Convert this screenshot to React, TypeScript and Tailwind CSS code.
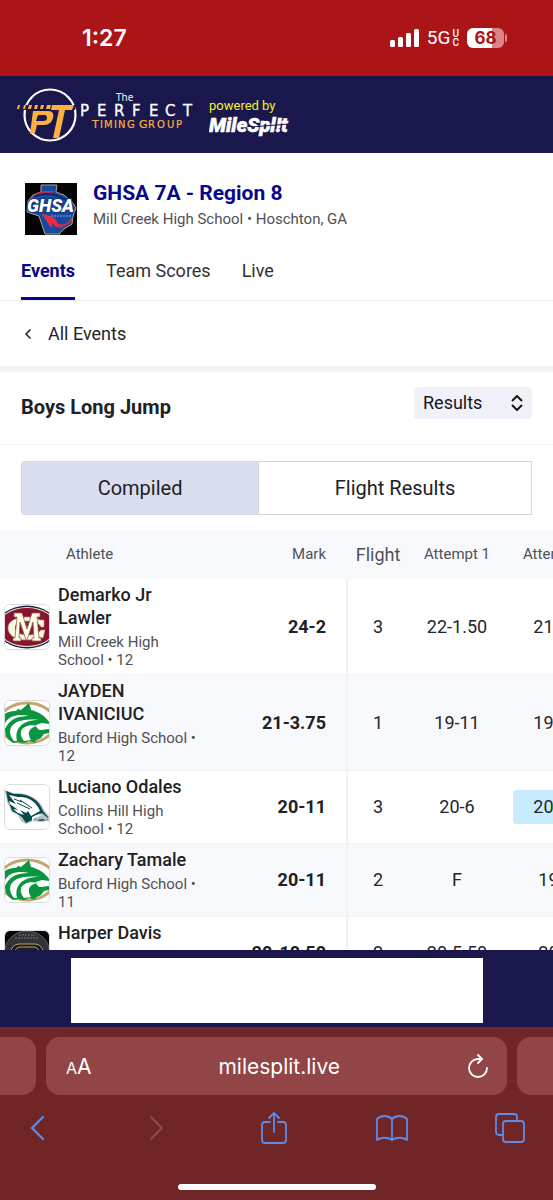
import type { ReactNode } from "react";
import { ChevronLeft } from "lucide-react";

type Result = {
  name: string;
  school: string;
  logo: ReactNode;
  mark: string;
  flight: string;
  attempts: { value: string; best?: boolean }[];
};

function PerfectTimingLogo() {
  return (
    <svg width="181" height="56" viewBox="0 0 181 56" role="img" aria-label="The Perfect Timing Group">
      <circle cx="34" cy="28" r="25.5" fill="none" stroke="#fff" strokeWidth="2.2" />
      <path d="M6 18h54l-1 5H4z" fill="#1a174d" />
      <g fill="#fbb040">
        <path d="M2 18h2l-1 4H1zM8 18h2l-1 4H7zM13 18h3l-1 4h-3zM19 18h3l-1 4h-3zM25 18h3l-1 4h-3zM31 18h4l-1 4h-4z" />
        <path d="M36 18h22l-2 5h-7l-6 28h-6l6-28h-8z" />
        <path
          fillRule="evenodd"
          d="M17 24h15c5 0 6 3 5 7s-4 7-9 7h-7l-2 8-5 1zM22 28l-2 6h7c3 0 4-1 4-3s-1-3-2-3z"
        />
      </g>
      <text x="100" y="14" fontSize="10" fill="#f1f1f6" fontFamily="Noto Sans, sans-serif">
        The
      </text>
      <text
        x="64 81 98 116 133 149 167"
        y="29"
        fontSize="15"
        fill="#fff"
        stroke="#fff"
        strokeWidth=".3"
        fontFamily="DejaVu Sans, sans-serif"
      >
        PERFECT
      </text>
      <text
        x="76 84 88 98 102 111 119 123 132 141 151 160"
        y="41"
        fontFamily="DejaVu Sans, sans-serif"
        fontSize="11"
        fill="#fbb040"
        stroke="#fbb040"
        strokeWidth=".2"
      >
        T<tspan fontSize="10">IMING </tspan>G<tspan fontSize="10">ROUP</tspan>
      </text>
    </svg>
  );
}

function MileSplitLogo() {
  return (
    <svg width="84" height="24" viewBox="0 0 84 24" role="img" aria-label="MileSplit">
      <text
        x="0"
        y="18"
        fontFamily="Roboto, sans-serif"
        fontSize="20"
        fontWeight="900"
        fontStyle="italic"
        fill="#fff"
        stroke="#fff"
        strokeWidth=".5"
      >
        MileSpl!t
      </text>
      <path d="M42 13l38-3" stroke="#1a174d" strokeWidth="1" />
    </svg>
  );
}

function GhsaLogo() {
  return (
    <svg viewBox="0 0 52 52" className="size-13 shrink-0" role="img" aria-label="GHSA">
      <path d="M0 0h52v52H0z" fill="#050507" />
      <path
        d="M16 2h16l-1 7 8 3 9 8 3 5-3 8-1 8-8 5-4 4v1H20l-3-9-3-9L2 29l1-11 5-6 8-3z"
        fill="#174a9f"
        stroke="#a9a58c"
        strokeWidth="1"
      />
      <path d="M7 16C10 9 19 8 28 9" fill="none" stroke="#e3263d" strokeWidth="1.5" />
      <path d="M9 14c9-5 23-4 35 5" fill="none" stroke="#0b2c6c" strokeWidth="2" />
      <path d="M16 31c6 1 12 2 15 6l3 5 6 3-9-1-4-4v5c-5-4-5-9-11-14z" fill="#ee2b3e" />
      <path d="M33 42c7 1 12-2 14-7" fill="none" stroke="#ee2b3e" strokeWidth="1.5" />
      <text
        x="2"
        y="29"
        fontFamily="Roboto, sans-serif"
        fontSize="18"
        fontWeight="900"
        fontStyle="italic"
        fill="#fff"
        stroke="#0d357c"
        strokeWidth="2"
        paintOrder="stroke"
      >
        GHSA
      </text>
      <path d="M26 33h20" stroke="#89a9de" strokeWidth="1" strokeDasharray="2 1" />
    </svg>
  );
}

function MillCreekLogo() {
  return (
    <svg viewBox="0 0 44 44" className="size-full" role="img" aria-label="Mill Creek">
      <path d="M0 0h44v44H0z" fill="#fff" />
      <ellipse cx="22" cy="22" rx="30" ry="21.5" fill="#17254a" />
      <ellipse cx="22" cy="22" rx="29" ry="20" fill="#efe6c4" />
      <ellipse cx="22" cy="22" rx="28" ry="19" fill="#8b1233" />
      <path
        d="M39 15v7h-3c-2-4-6-6-13-6-9 0-13 3-13 7s4 7 13 7c7 0 11-2 13-5h4l-2 8-4-1c-3 2-7 3-12 3C10 35 3 30 3 23s8-11 19-11c5 0 10 1 13 3z"
        fill="#fdf8e4"
        stroke="#b49a62"
        strokeWidth=".6"
      />
      <path
        d="M9 8h8l5 16 5-16h8v4h-3l2 21h2v3h-9v-3h2l-1-16-6 18h-1l-6-18-1 16h2v3H8v-3h2l2-21H9z"
        fill="#fffdf0"
        stroke="#8b6a3b"
        strokeWidth=".8"
      />
    </svg>
  );
}

function BufordLogo() {
  return (
    <svg viewBox="0 0 44 44" className="size-full" role="img" aria-label="Buford">
      <path d="M0 0h44v44H0z" fill="#fff" />
      <ellipse cx="22" cy="22" rx="28" ry="20" fill="none" stroke="#c3a66f" strokeWidth="3" />
      <path
        d="M0 13c4-3 8-3 11-3l2-2 3 1 8-7 2 7c8 2 14 6 18 12v3l-8-1-5 2 3 4 10-1v4l-5 1-3 4-6 3 1 2-7-2-5 2-6-1-5 1C3 39 0 35 0 28z"
        fill="#0a9640"
      />
      <path d="M9 40C0 29 6 16 34 19 19 19 9 26 12 40z" fill="#fff" />
      <path d="M0 22C5 14 14 13 24 15 12 15 5 18 0 28z" fill="#fff" />
      <path d="M19 40c-8-10 0-18 14-15-8 1-12 6-7 14z" fill="#fff" />
      <path d="M31 24l6-2 7 1v4l-8 2-4-2z" fill="#fff" />
    </svg>
  );
}

function CollinsHillLogo() {
  return (
    <svg viewBox="0 0 44 44" className="size-full" role="img" aria-label="Collins Hill">
      <path d="M0 0h44v44H0z" fill="#fff" />
      <path d="M0 5l8 3c16-1 27 6 31 17l5 6v5l-9 1-7-1-7 3-5-3-3-6-6-3-3-6-2-4z" fill="#b9c0c2" />
      <path d="M1 6l8 3c14-1 25 5 29 17l5 6v3l-8 1-6-2-8 4-4-6-6-4-4-2-2-6-2-4z" fill="#064c4c" />
      <path
        d="M4 10l9 2c10-1 19 5 22 14l-9 5-3-5-2 2-6-3 4 5-6-2-5-4 5 1-8-6-1-3 7 3z"
        fill="#fff"
      />
      <path d="M12 18l13 6M15 15l12 8M9 14l8 3" stroke="#064c4c" strokeWidth="1" />
      <path d="M29 31l8-3 6 5-1 3-4-2-7 1z" fill="#b5c1c4" />
      <path d="M27 32l7-3 3 1-7 3-3 3z" fill="#fff" />
    </svg>
  );
}

function TrackBadgeLogo() {
  return (
    <svg viewBox="0 0 44 44" className="size-full" role="img" aria-label="Track and Field">
      <path d="M0 0h44v44H0z" fill="#070809" />
      <circle cx="22" cy="23" r="23" fill="#303235" stroke="#606163" strokeWidth="1" />
      <path d="M14 4h16M10 7h24" stroke="#777" strokeWidth="1" strokeDasharray="2 1" />
      <rect x="6" y="13" width="32" height="24" rx="8" fill="#18191b" stroke="#b7a76b" strokeWidth="1" />
      <rect x="10" y="16" width="24" height="18" rx="5" fill="#202020" stroke="#b7a76b" strokeWidth="1" />
    </svg>
  );
}

const tabs = ["Events", "Team Scores", "Live"];

const results: Result[] = [
  {
    name: "Demarko Jr Lawler",
    school: "Mill Creek High School • 12",
    logo: <MillCreekLogo />,
    mark: "24-2",
    flight: "3",
    attempts: [{ value: "22-1.50" }, { value: "21-10" }],
  },
  {
    name: "JAYDEN IVANICIUC",
    school: "Buford High School • 12",
    logo: <BufordLogo />,
    mark: "21-3.75",
    flight: "1",
    attempts: [{ value: "19-11" }, { value: "19-10" }],
  },
  {
    name: "Luciano Odales",
    school: "Collins Hill High School • 12",
    logo: <CollinsHillLogo />,
    mark: "20-11",
    flight: "3",
    attempts: [{ value: "20-6" }, { value: "20-11", best: true }],
  },
  {
    name: "Zachary Tamale",
    school: "Buford High School • 11",
    logo: <BufordLogo />,
    mark: "20-11",
    flight: "2",
    attempts: [{ value: "F" }, { value: "19-9" }],
  },
  {
    name: "Harper Davis",
    school: "",
    logo: <TrackBadgeLogo />,
    mark: "20-10.50",
    flight: "2",
    attempts: [{ value: "20-5.50" }, { value: "20-9" }],
  },
];

function StatusBar() {
  return (
    <div className="flex h-19 shrink-0 items-center justify-between bg-[#ab1517] pr-[46px] pl-[82px] text-white">
      <span className="font-[Inter,sans-serif] text-[23px] font-semibold">1:27</span>
      <div className="flex items-center gap-2">
        <svg width="29" height="18" viewBox="0 0 29 18" fill="#fff" aria-hidden="true">
          <rect y="11" width="5" height="7" rx="1.5" />
          <rect x="8" y="8" width="5" height="10" rx="1.5" />
          <rect x="16" y="4" width="5" height="14" rx="1.5" />
          <rect x="24" width="5" height="18" rx="1.5" />
        </svg>
        <div className="flex items-center gap-0.5 font-[Roboto,sans-serif]">
          <span className="text-[19px] leading-5">5G</span>
          <span className="flex flex-col text-[10px] leading-[9px] font-medium">
            <span>U</span>
            <span>C</span>
          </span>
        </div>
        <div className="flex items-center gap-px">
          <span className="flex h-5 w-[37px] items-center justify-center rounded-md bg-linear-to-r from-white from-68% to-[#d98585] to-68% font-[Inter,sans-serif] text-[17px] leading-5 font-bold text-[#a71517]">
            68
          </span>
          <span className="h-2 w-0.5 rounded-r-full bg-[#d98585]" />
        </div>
      </div>
    </div>
  );
}

function SiteHeader() {
  return (
    <header className="flex h-[77px] shrink-0 items-center gap-2 bg-[#1a174d] px-4">
      <PerfectTimingLogo />
      <div className="flex flex-col pt-1.5 pl-1">
        <span className="text-[13px] leading-4 text-[#f2f224]">powered by</span>
        <MileSplitLogo />
      </div>
    </header>
  );
}

function MeetHeader() {
  return (
    <>
      <div className="flex gap-4 px-[25px] pt-[30px]">
        <GhsaLogo />
        <div>
          <h1 className="text-[21px] leading-5 font-bold text-[#08088c]">GHSA 7A - Region 8</h1>
          <p className="mt-1.5 text-[15px] leading-5 text-[#505154]">Mill Creek High School • Hoschton, GA</p>
        </div>
      </div>
      <nav className="mt-1 flex gap-[31px] border-b border-[#eeeef0] px-[21px]">
        {tabs.map((tab) => (
          <a
            key={tab}
            href="#"
            className={
              tab === "Events"
                ? "border-b-3 border-[#08088c] pt-5 pb-3.5 text-lg leading-6 font-bold text-[#08088c]"
                : "border-b-3 border-transparent pt-5 pb-3.5 text-lg leading-6 text-[#303134]"
            }
          >
            {tab}
          </a>
        ))}
      </nav>
      <a
        href="#"
        className="flex h-[71px] items-center gap-3 border-b-6 border-[#f3f3f4] px-5 text-lg text-[#242528]"
      >
        <ChevronLeft className="size-4" strokeWidth={2.5} />
        All Events
      </a>
    </>
  );
}

function EventToolbar() {
  return (
    <>
      <div className="flex h-[73px] items-start justify-between border-b border-[#f1f1f3] px-[21px] pt-[15px]">
        <h2 className="pt-2 text-xl leading-6 font-bold text-[#202124]">Boys Long Jump</h2>
        <div className="relative">
          <select
            aria-label="View"
            className="h-8 w-[118px] appearance-none rounded bg-[#f1f1f9] px-[9px] text-lg leading-6 text-[#161619]"
          >
            <option>Results</option>
          </select>
          <svg
            width="14"
            height="16"
            viewBox="0 0 14 16"
            fill="none"
            stroke="#161619"
            strokeWidth="2"
            className="pointer-events-none absolute top-2 right-2"
          >
            <path d="M2 6l5-5 5 5M2 10l5 5 5-5" />
          </svg>
        </div>
      </div>
      <div className="flex px-[21px] py-4 text-xl text-[#202124]">
        <button className="h-[54px] flex-auto rounded-l border border-[#d3d7e6] bg-[#d9deee]">Compiled</button>
        <button className="h-[54px] flex-auto border border-l-0 border-[#d3d4d8] bg-white">Flight Results</button>
      </div>
    </>
  );
}

function ResultsTable() {
  return (
    <div className="overflow-hidden">
      <table className="w-full min-w-[606px] table-fixed border-separate border-spacing-0 text-lg text-[#242528]">
        <colgroup>
          <col className="w-[58px]" />
          <col className="w-[150px]" />
          <col className="w-[140px]" />
          <col className="w-[60px]" />
          <col className="w-[98px]" />
          <col />
        </colgroup>
        <thead>
          <tr className="h-12 bg-[#f8f9fd] text-[15px] text-[#505154]">
            <th />
            <th className="px-2 text-left font-normal">Athlete</th>
            <th className="pr-[22px] text-right font-normal">Mark</th>
            <th className="text-lg leading-5 font-normal">Flight</th>
            <th className="font-normal">Attempt 1</th>
            <th className="font-normal">Attempt 2</th>
          </tr>
        </thead>
        <tbody>
          {results.map((result) => (
            <tr key={result.name} className="h-[73px] even:bg-[#f8f9fd] *:border-b *:border-[#f1f2f6]">
              <td className="pl-1">
                <div className="size-[46px] overflow-hidden rounded-md border border-[#dcdce0]">{result.logo}</div>
              </td>
              <td className="pt-1 pb-[5px] align-top">
                <p className="pr-1 leading-[23px] font-medium text-[#202124]">{result.name}</p>
                <p className="mt-1 text-[15px] leading-[18px] text-[#505154]">{result.school}</p>
              </td>
              <td className="border-r-2 pr-5 text-right leading-6 font-bold text-[#202124]">{result.mark}</td>
              <td className="text-center leading-6">{result.flight}</td>
              {result.attempts.map((attempt, index) => (
                <td key={index} className="px-[7px] text-center leading-6">
                  {attempt.best ? (
                    <span className="block rounded bg-[#c8ecfd] py-[5px]">{attempt.value}</span>
                  ) : (
                    attempt.value
                  )}
                </td>
              ))}
            </tr>
          ))}
        </tbody>
      </table>
    </div>
  );
}

function BrowserBar() {
  return (
    <footer className="shrink-0 bg-[#702626] font-[Inter,sans-serif]">
      <div className="flex gap-2.5 pt-2.5">
        <div className="h-[58px] w-9 rounded-r-[14px] bg-[#914546]" />
        <div className="flex h-[58px] flex-1 items-center justify-between rounded-[14px] bg-[#914546] pt-0.5 pr-[18px] pl-5 text-white">
          <button aria-label="Page settings" className="flex items-baseline">
            <span className="text-base">A</span>
            <span className="text-[21px]">A</span>
          </button>
          <span className="text-[21px]">milesplit.live</span>
          <button aria-label="Reload">
            <svg width="22" height="26" viewBox="0 0 22 26" fill="none" stroke="#fff" strokeWidth="1.8" strokeLinecap="round" strokeLinejoin="round">
              <path d="M20 14a9 9 0 1 1-9-9h4" />
              <path d="M11 1l4 4-4 4" />
            </svg>
          </button>
        </div>
        <div className="h-[58px] w-9 rounded-l-[14px] bg-[#914546]" />
      </div>
      <div className="flex h-[66px] items-center justify-between pr-[25px] pl-5 text-[#608be8]">
        <button aria-label="Back" className="flex w-9 justify-center">
          <svg width="18" height="26" viewBox="0 0 18 26" fill="none" stroke="currentColor" strokeWidth="2.2" strokeLinecap="round">
            <path d="M14 2L3 13l11 11" />
          </svg>
        </button>
        <button aria-label="Forward" className="flex w-9 justify-center text-[#8d4d50]">
          <svg width="18" height="26" viewBox="0 0 18 26" fill="none" stroke="currentColor" strokeWidth="2" strokeLinecap="round">
            <path d="M4 2l11 11L4 24" />
          </svg>
        </button>
        <button aria-label="Share" className="flex w-9 justify-center">
          <svg width="26" height="34" viewBox="0 0 26 34" fill="none" stroke="currentColor" strokeWidth="1.8" strokeLinecap="round">
            <path d="M9 11H4a3 3 0 0 0-3 3v15a3 3 0 0 0 3 3h18a3 3 0 0 0 3-3V14a3 3 0 0 0-3-3h-5" />
            <path d="M13 21V2M8 7l5-5 5 5" />
          </svg>
        </button>
        <button aria-label="Bookmarks" className="flex w-9 justify-center">
          <svg width="32" height="28" viewBox="0 0 32 28" fill="none" stroke="currentColor" strokeWidth="1.8" strokeLinejoin="round">
            <path d="M16 26c-4-3-11-3-15 0V5c4-4 11-4 15 0zM16 26c4-3 11-3 15 0V5c-4-4-11-4-15 0z" />
          </svg>
        </button>
        <button aria-label="Tabs" className="flex w-9 justify-center">
          <svg width="30" height="30" viewBox="0 0 30 30" fill="none" stroke="currentColor" strokeWidth="1.8">
            <path d="M8 22H4a3 3 0 0 1-3-3V4a3 3 0 0 1 3-3h15a3 3 0 0 1 3 3v4" />
            <rect x="8" y="8" width="21" height="21" rx="3" />
          </svg>
        </button>
      </div>
      <div className="flex h-[39px] items-end justify-center pb-2.5">
        <div className="h-1.5 w-[198px] rounded-full bg-white" />
      </div>
    </footer>
  );
}

export default function App() {
  return (
    <div className="flex h-screen flex-col bg-white font-[Roboto,sans-serif]">
      <StatusBar />
      <SiteHeader />
      <main className="min-h-0 flex-1 overflow-hidden">
        <MeetHeader />
        <EventToolbar />
        <ResultsTable />
      </main>
      <div className="flex shrink-0 justify-center bg-[#1a174d] pt-2 pb-1">
        <div className="h-[65px] w-[412px] bg-white" />
      </div>
      <BrowserBar />
    </div>
  );
}
